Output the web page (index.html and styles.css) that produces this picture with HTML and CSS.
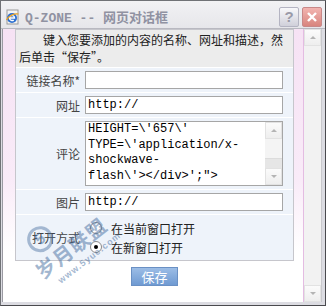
FILE: index.html
```html
<!DOCTYPE html>
<html lang="zh-CN">
  <head>
    <meta charset="UTF-8" />
    <title>Q-ZONE -- 网页对话框</title>
    <link rel="stylesheet" href="styles.css">
  </head>
  <body>
    <div class="window">
      <div class="titlebar">
        <svg class="app-icon" width="16" height="16" viewBox="0 0 16 16">
          <rect x="2" y="1" width="11" height="14" fill="#f4f4f4" stroke="#9a9a9a" />
          <circle cx="7" cy="9" r="5" fill="#2d6fd0" />
          <path d="M4.5 9h5a2.5 2.5 0 1 0 -0.8 1.9" fill="none" stroke="#fff" stroke-width="1.4" />
          <path d="M1.5 11c2-4 8-7 12-6" fill="none" stroke="#e8a020" stroke-width="1.2" />
        </svg>
        <span class="title">Q-ZONE -- 网页对话框</span>
        <div class="title-buttons">
          <span class="tbtn help">?</span>
          <span class="tbtn close">
            <svg width="12" height="12" viewBox="0 0 12 12">
              <path d="M2 2l8 8M10 2l-8 8" stroke="#fff" stroke-width="2.4" />
            </svg>
          </span>
        </div>
      </div>

      <div class="frame">
        <div class="doc">
          <div class="panel">
            <p class="intro">键入您要添加的内容的名称、网址和描述，然后单击“保存”。</p>

            <div class="row">
              <label class="label">链接名称*</label>
              <div class="field"></div>
            </div>
            <div class="row">
              <label class="label">网址</label>
              <div class="field">http://</div>
            </div>
            <div class="row row-tall">
              <label class="label">评论</label>
              <div class="field area">
                <div class="area-text">HEIGHT=\'657\'<br>TYPE=\'application/x-<br>shockwave-<br>flash\'&gt;&lt;/div&gt;';"&gt;</div>
                <div class="area-scroll">
                  <span class="sbtn up"></span>
                  <span class="strack"><span class="sthumb"></span></span>
                  <span class="sbtn down"></span>
                </div>
              </div>
            </div>
            <div class="row">
              <label class="label">图片</label>
              <div class="field">http://</div>
            </div>
            <div class="row row-radio">
              <label class="label">打开方式</label>
              <div class="radios">
                <label class="radio"><input type="radio" name="target" />在当前窗口打开</label>
                <label class="radio"><input type="radio" name="target" checked />在新窗口打开</label>
              </div>
            </div>
          </div>

          <div class="actions">
            <button class="save">保存</button>
          </div>

          <div class="watermark">
            <span class="wm-logo">5</span>
            <span class="wm-name">岁月联盟</span>
            <span class="wm-url">www.5yue.com</span>
          </div>
        </div>

        <div class="scrollbar">
          <span class="sbtn up"></span>
          <span class="strack"></span>
          <span class="sbtn down"></span>
        </div>
      </div>
    </div>
  </body>
</html>
```

FILE: styles.css
```css
*,
*::before,
*::after {
  box-sizing: border-box;
}

body {
  margin: 0;
  background: #fff;
  font-family: "Noto Sans CJK SC", sans-serif;
  font-size: 12px;
  color: #333;
}

.window {
  width: 326px;
  height: 306px;
  display: flex;
  flex-direction: column;
  border: 1px solid #707276;
  border-right-color: #4a4a4e;
  border-bottom-color: #4a4a4e;
  background: #dcdce2;
  overflow: hidden;
}

/* title bar */
.titlebar {
  height: 27px;
  display: flex;
  align-items: center;
  padding: 4px 3px 0 4px;
  background: linear-gradient(#f2f2f4, #e6e6ea);
}

.app-icon {
  flex: none;
  margin-right: 4px;
}

.title {
  flex: 1;
  font-family: "Liberation Mono", "Noto Sans CJK SC", monospace;
  font-size: 13px;
  font-weight: bold;
  color: #9092a2;
  white-space: pre;
}

.title-buttons {
  display: flex;
  gap: 3px;
}

.tbtn {
  width: 20px;
  height: 20px;
  display: flex;
  align-items: center;
  justify-content: center;
  border-radius: 2px;
}

.help {
  border: 1px solid #b4b4c2;
  background: linear-gradient(#f8f8fa, #d0d0da);
  color: #9a9aa8;
  font-family: "Liberation Sans", sans-serif;
  font-size: 15px;
  font-weight: bold;
}

.close {
  border: 1px solid #c88888;
  background: linear-gradient(#f2b4b0, #d8857e);
}

/* client area */
.frame {
  flex: 1;
  display: flex;
  padding: 0 3px 3px 1px;
  border-top: 1px solid #b8b8c0;
}

.doc {
  position: relative;
  flex: 1;
  padding: 0 9px 0 12px;
  background: linear-gradient(#f6e2f4 0%, #f9ebf8 55%, #fff 82%);
  border-left: 1px solid #9a9aa2;
  border-right: 1px solid #e4bce2;
}

.panel {
  display: flex;
  flex-direction: column;
  gap: 1px;
  border: 1px solid #c6c6cc;
  background: #fff;
}

.intro {
  margin: 0;
  padding: 1px 8px 2px 3px;
  background: #ececec;
  font-size: 12px;
  line-height: 17px;
  text-indent: 2em;
  color: #222;
}

.row {
  height: 24px;
  display: grid;
  grid-template-columns: 64px 1fr;
  column-gap: 5px;
  align-items: center;
  padding-right: 10px;
  background: #eef3fa;
}

.row-tall {
  height: 71px;
}

.row-radio {
  height: 45px;
}

.label {
  text-align: right;
  color: #444;
  font-size: 12px;
  white-space: nowrap;
}

.field {
  height: 18px;
  border: 1px solid #a6a6a6;
  background: #fff;
  padding: 0 2px;
  font-family: "Liberation Mono", monospace;
  font-size: 12px;
  line-height: 16px;
  color: #000;
}

.area {
  height: 65px;
  display: flex;
  padding: 0 0 0 2px;
}

.area-text {
  flex: 1;
  line-height: 15.5px;
  white-space: nowrap;
  overflow: hidden;
}

.area-scroll {
  width: 17px;
  display: flex;
  flex-direction: column;
  background: #f4f4f4;
}

.sbtn {
  height: 17px;
  display: flex;
  align-items: center;
  justify-content: center;
  border: 1px solid #e2e2e2;
  background: linear-gradient(#fbfbfb, #eeeeee);
}

.sbtn::before {
  content: "";
  border-left: 3px solid transparent;
  border-right: 3px solid transparent;
}

.sbtn.up::before {
  border-bottom: 3px solid #b4b4b4;
}

.sbtn.down::before {
  border-top: 3px solid #b4b4b4;
}

.strack {
  flex: 1;
  display: flex;
  flex-direction: column;
  justify-content: flex-end;
}

.sthumb {
  height: 10px;
  background: #e6e6e6;
  border-top: 1px solid #dcdcdc;
}

.radios {
  display: flex;
  flex-direction: column;
  padding-left: 5px;
}

.radio {
  height: 19px;
  display: flex;
  align-items: center;
  font-size: 12px;
  color: #222;
}

.radio input {
  appearance: none;
  width: 12px;
  height: 12px;
  margin: 0 9px 0 0;
  border: 1px solid #8a8a8a;
  border-radius: 50%;
  background: #fff;
  display: grid;
  place-items: center;
}

.radio input:checked::after {
  content: "";
  width: 4px;
  height: 4px;
  border-radius: 50%;
  background: #000;
}

.actions {
  display: flex;
  justify-content: center;
  padding-top: 6px;
}

.save {
  width: 47px;
  height: 19px;
  padding: 0;
  border: 1px solid #6a90c4;
  background: linear-gradient(#9cbde6, #6f9ad2);
  color: #fff;
  font-family: "Noto Sans CJK SC", sans-serif;
  font-size: 13px;
  line-height: 16px;
}

/* site watermark over the dialog */
.watermark {
  position: absolute;
  left: 18px;
  top: 180px;
  width: 96px;
  height: 66px;
  transform: rotate(-38deg);
  color: rgba(70, 110, 160, 0.5);
  pointer-events: none;
}

.wm-logo {
  position: absolute;
  left: 14px;
  top: 0;
  width: 26px;
  height: 26px;
  border: 3px solid rgba(70, 110, 160, 0.45);
  border-radius: 50%;
  font-family: "Liberation Sans", sans-serif;
  font-weight: bold;
  font-size: 16px;
  line-height: 20px;
  text-align: center;
}

.wm-name {
  position: absolute;
  left: 4px;
  top: 27px;
  font-size: 20px;
  line-height: 24px;
  font-weight: bold;
  letter-spacing: 1px;
}

.wm-url {
  position: absolute;
  left: 16px;
  top: 52px;
  font-family: "Liberation Sans", sans-serif;
  font-size: 9px;
  line-height: 12px;
  font-weight: bold;
  letter-spacing: 1px;
}

.scrollbar {
  width: 18px;
  display: flex;
  flex-direction: column;
  background: #f2f2f2;
  border-right: 1px solid #c8c8cc;
}
```
